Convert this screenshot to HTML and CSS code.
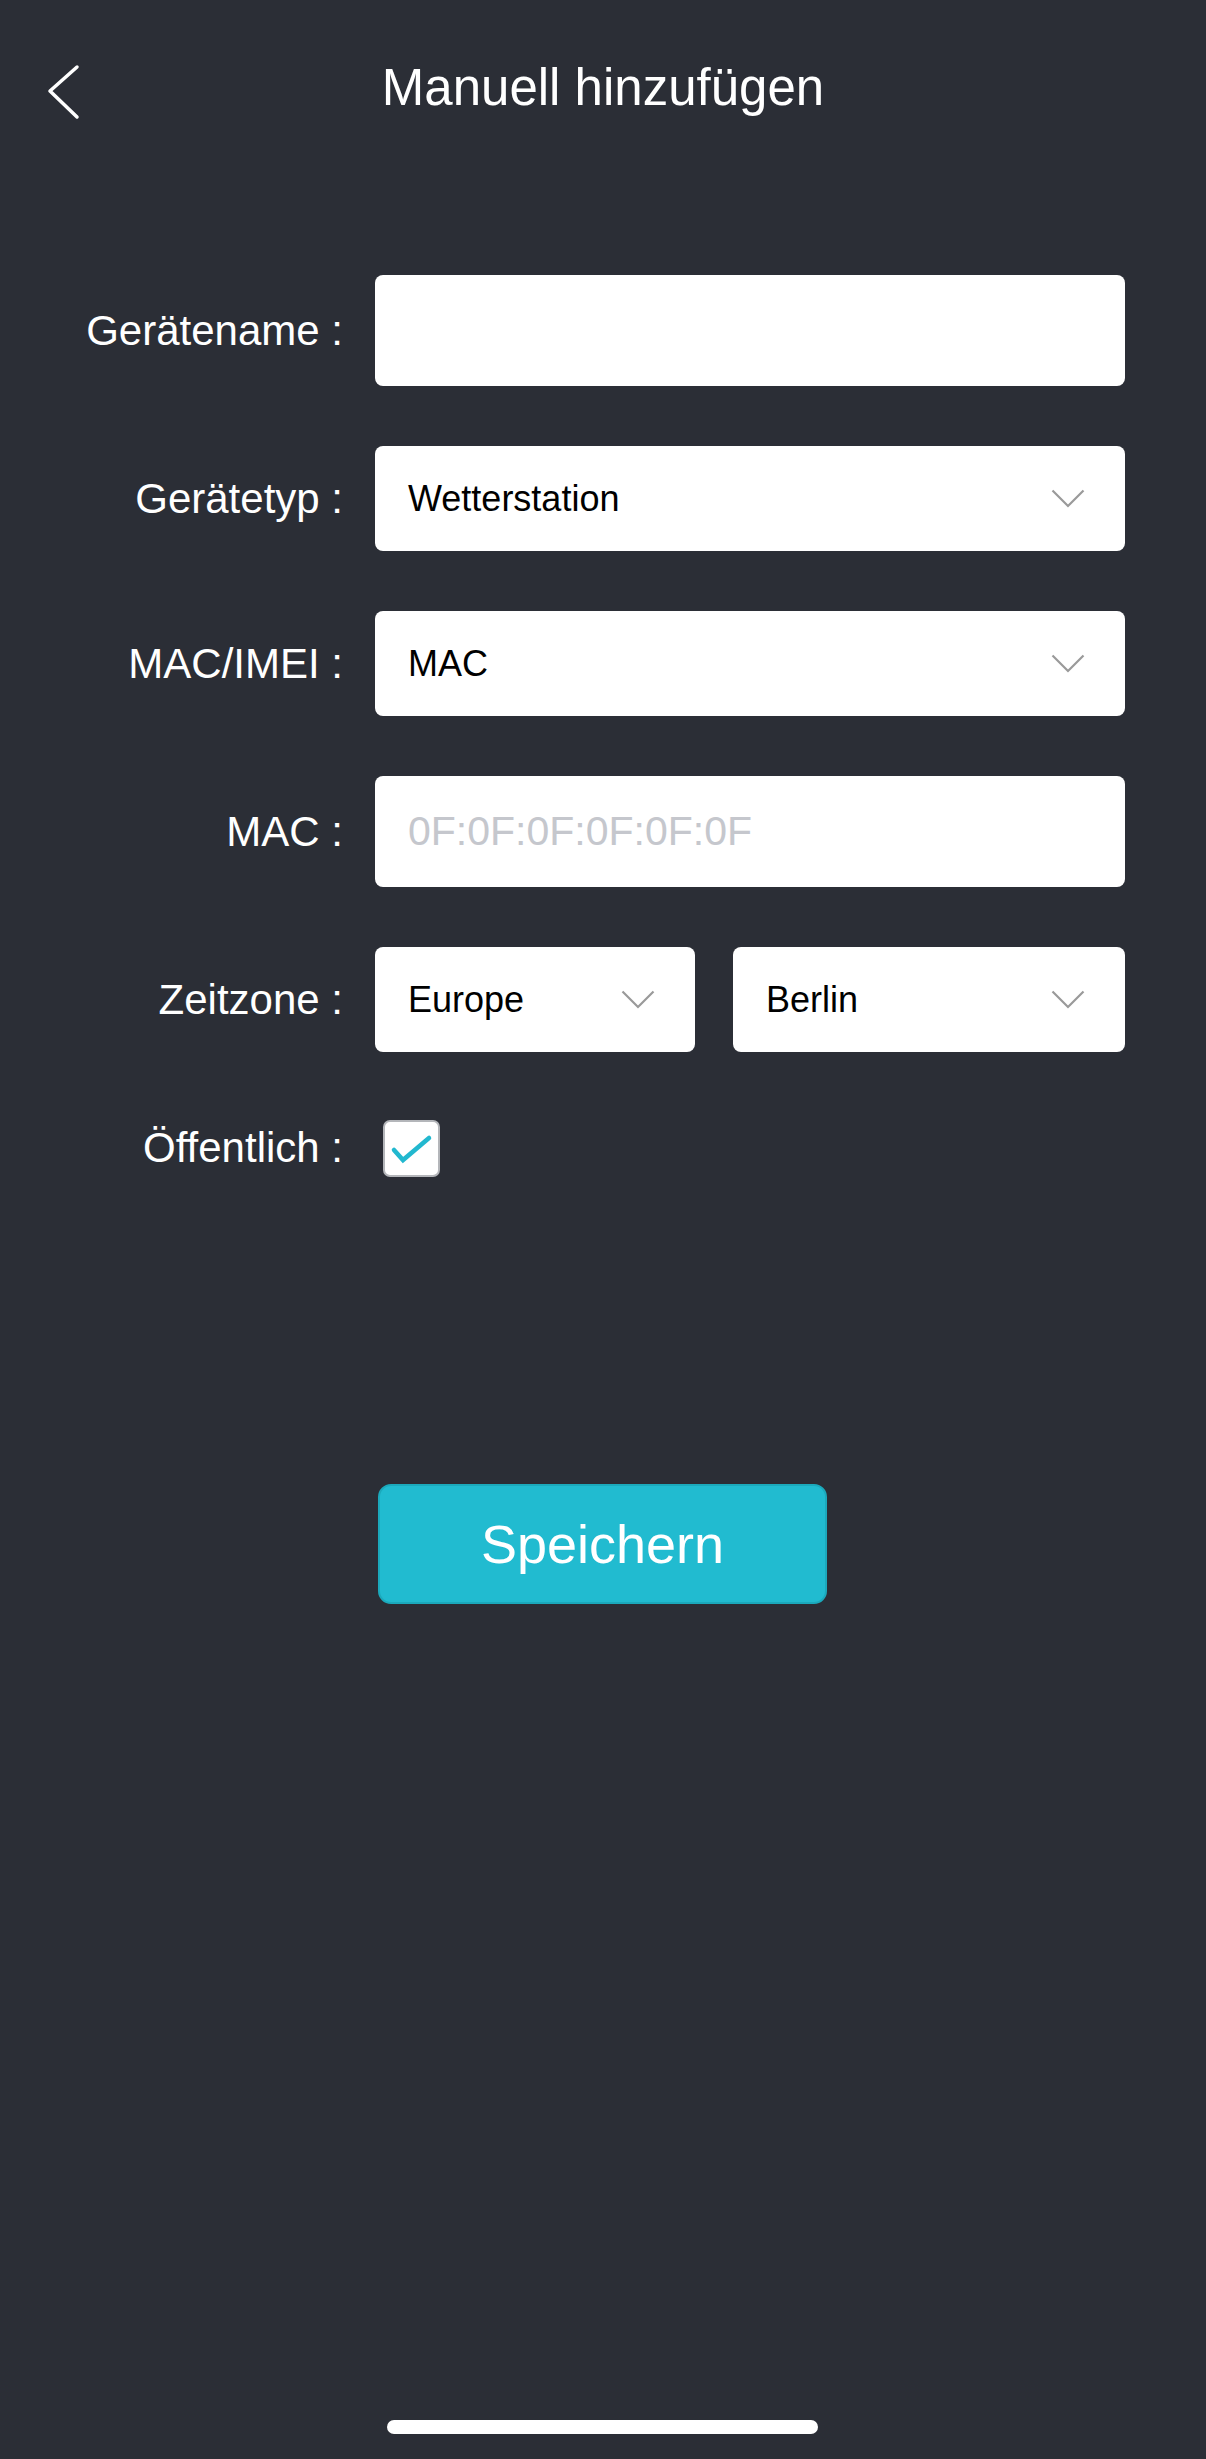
FILE: index.html
```html
<!DOCTYPE html>
<html lang="de">
<head>
<meta charset="utf-8">
<title>Manuell hinzufügen</title>
<link rel="stylesheet" href="styles.css">
</head>
<body>
<div class="screen">
  <header class="header">
    <button class="back" aria-label="Zurück">
      <svg width="40" height="60" viewBox="0 0 40 60"><path d="M34 7 L7 31 L34 57" fill="none" stroke="#fff" stroke-width="3.5" stroke-linecap="round" stroke-linejoin="round"/></svg>
    </button>
    <h1 class="title">Manuell hinzufügen</h1>
  </header>

  <form class="form">
    <label class="label row-tall">Gerätename :</label>
    <div class="field input row-tall"></div>

    <label class="label row-sel">Gerätetyp :</label>
    <div class="field select row-sel"><span>Wetterstation</span><svg class="chev" width="34" height="20" viewBox="0 0 34 20"><path d="M1.5 1.5 L17 17 L32.5 1.5" fill="none" stroke="#9a9a9a" stroke-width="2.2"/></svg></div>

    <label class="label row-sel">MAC/IMEI :</label>
    <div class="field select row-sel"><span>MAC</span><svg class="chev" width="34" height="20" viewBox="0 0 34 20"><path d="M1.5 1.5 L17 17 L32.5 1.5" fill="none" stroke="#9a9a9a" stroke-width="2.2"/></svg></div>

    <label class="label row-tall">MAC :</label>
    <div class="field input row-tall"><span class="placeholder">0F:0F:0F:0F:0F:0F</span></div>

    <label class="label row-tz">Zeitzone :</label>
    <div class="tz row-tz">
      <div class="field select"><span>Europe</span><svg class="chev" width="34" height="20" viewBox="0 0 34 20"><path d="M1.5 1.5 L17 17 L32.5 1.5" fill="none" stroke="#9a9a9a" stroke-width="2.2"/></svg></div>
      <div class="field select"><span>Berlin</span><svg class="chev" width="34" height="20" viewBox="0 0 34 20"><path d="M1.5 1.5 L17 17 L32.5 1.5" fill="none" stroke="#9a9a9a" stroke-width="2.2"/></svg></div>
    </div>

    <label class="label row-check">Öffentlich :</label>
    <div class="check-wrap row-check">
      <span class="checkbox">
        <svg width="57" height="57" viewBox="0 0 57 57"><path d="M11 30 L20 40 L46 18" fill="none" stroke="#22b8cf" stroke-width="4.5" stroke-linecap="round" stroke-linejoin="miter"/></svg>
      </span>
    </div>
  </form>

  <div class="actions">
    <button class="save" type="button">Speichern</button>
  </div>

  <div class="home-indicator"></div>
</div>
</body>
</html>
```

FILE: styles.css
```css
html, body {
  margin: 0;
  padding: 0;
  background: #2b2e36;
}

.screen {
  position: relative;
  width: 1206px;
  height: 2459px;
  background: #2b2e36;
  font-family: "Liberation Sans", Arial, sans-serif;
  color: #fff;
  overflow: hidden;
}

.header {
  position: relative;
  height: 176px;
  display: flex;
  align-items: center;
  justify-content: center;
}

.back {
  position: absolute;
  left: 43px;
  top: 60px;
  width: 40px;
  height: 60px;
  padding: 0;
  border: 0;
  background: none;
  display: block;
}

.back svg {
  display: block;
}

.title {
  margin: 0;
  font-size: 51px;
  font-weight: normal;
  line-height: 60px;
  color: #fff;
}

.form {
  margin-top: 99px;
  display: grid;
  grid-template-columns: 343px 750px;
  column-gap: 32px;
  row-gap: 60px;
}

.row-tall { height: 111px; }
.row-sel { height: 105px; }
.row-tz { height: 105px; }
.row-check { height: 72px; }

.label {
  display: flex;
  align-items: center;
  justify-content: flex-end;
  font-size: 42px;
  color: #fff;
  white-space: nowrap;
}

.field {
  box-sizing: border-box;
  background: #fff;
  border-radius: 8px;
  display: flex;
  align-items: center;
  padding: 0 40px 0 33px;
  font-size: 36px;
  color: #000;
}

.select {
  justify-content: space-between;
}

.chev {
  display: block;
  flex: none;
}

.placeholder {
  font-size: 41px;
  color: #c5c7cd;
}

.tz {
  display: grid;
  grid-template-columns: 320px 392px;
  column-gap: 38px;
}

.tz .field {
  height: 105px;
}

.check-wrap {
  display: flex;
  align-items: center;
  padding-left: 8px;
}

.checkbox {
  box-sizing: border-box;
  width: 57px;
  height: 57px;
  border: 2px solid #b4b6ba;
  border-radius: 7px;
  background: #fff;
  display: block;
  position: relative;
}

.checkbox svg {
  position: absolute;
  left: -2px;
  top: -2px;
}

.actions {
  margin-top: 300px;
  display: flex;
  justify-content: center;
}

.save {
  box-sizing: border-box;
  width: 449px;
  height: 120px;
  margin-left: -1px;
  background: #21bbd0;
  border: 2px solid #1ba9bc;
  border-radius: 13px;
  color: #fff;
  font-family: "Liberation Sans", Arial, sans-serif;
  font-size: 54px;
  padding: 0;
}

.home-indicator {
  position: absolute;
  left: 387px;
  bottom: 25px;
  width: 431px;
  height: 14px;
  border-radius: 7px;
  background: #fff;
}
```
